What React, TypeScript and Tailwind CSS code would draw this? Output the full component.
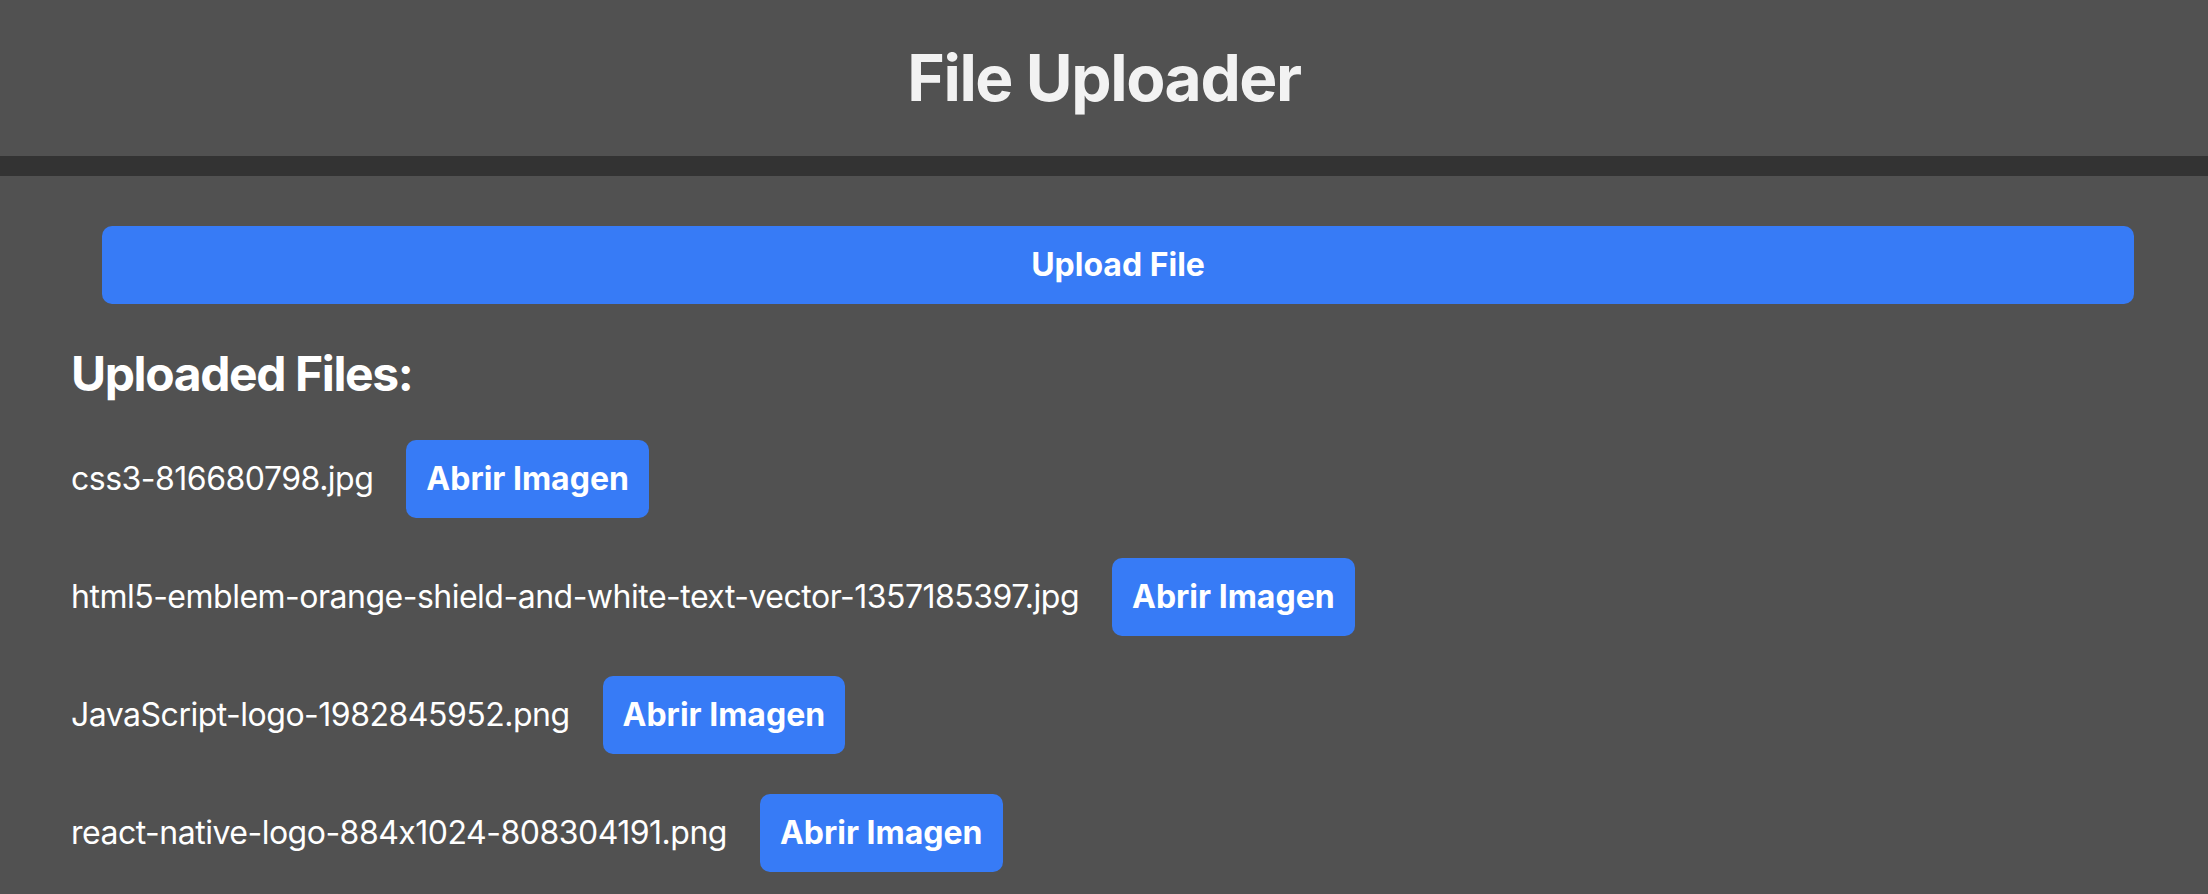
const files = [
  'css3-816680798.jpg',
  'html5-emblem-orange-shield-and-white-text-vector-1357185397.jpg',
  'JavaScript-logo-1982845952.png',
  'react-native-logo-884x1024-808304191.png',
];

export default function App() {
  return (
    <div
      className="min-h-[894px] bg-[#515151] text-white [font-feature-settings:'calt'_0]"
      style={{ fontFamily: 'Inter, "Noto Sans", sans-serif' }}
    >
      <header className="flex h-[176px] items-center justify-center border-b-[20px] border-[#333333]">
        <h1 className="text-[64px] font-bold leading-none tracking-[-1.4px] text-[#f2f2f2]">
          File Uploader
        </h1>
      </header>

      <main className="pl-[71px] pr-[74px] pt-[50px]">
        <button className="ml-[31px] block h-[78px] w-[calc(100%-31px)] rounded-[10px] bg-[#377bf6] text-[32px] font-bold text-white">
          Upload File
        </button>

        <h2 className="mt-[41px] text-[48px] font-bold leading-[1.2] tracking-[-1.4px]">
          Uploaded Files:
        </h2>

        <ul className="mt-[37px] flex flex-col gap-[40px]">
          {files.map((name) => (
            <li key={name} className="flex h-[78px] items-center gap-[33px]">
              <span className="text-[32px] tracking-[-0.5px]">{name}</span>
              <button className="h-[78px] rounded-[10px] bg-[#377bf6] px-[20px] text-[32px] font-bold text-white">
                Abrir Imagen
              </button>
            </li>
          ))}
        </ul>
      </main>
    </div>
  );
}
